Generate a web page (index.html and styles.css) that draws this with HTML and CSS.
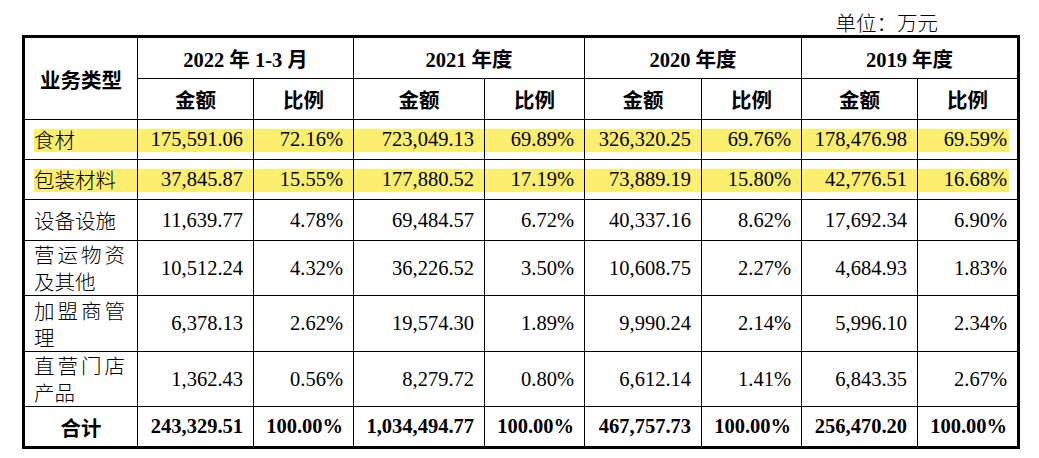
FILE: index.html
```html
<!DOCTYPE html>
<html lang="zh-CN">
<head>
<meta charset="utf-8">
<title>业务类型</title>
<link rel="stylesheet" href="styles.css">
</head>
<body>
<div class="wrap">
  <div class="unit">单位：万元</div>
  <table class="tbl">
    <colgroup>
      <col class="c1"><col class="c2"><col class="c3"><col class="c4"><col class="c5"><col class="c6"><col class="c7"><col class="c8"><col class="c9">
    </colgroup>
    <tr class="h1">
      <td rowspan="2" class="th">业务类型</td>
      <td colspan="2" class="th">2022 年 1-3 月</td>
      <td colspan="2" class="th">2021 年度</td>
      <td colspan="2" class="th">2020 年度</td>
      <td colspan="2" class="th last">2019 年度</td>
    </tr>
    <tr class="h2">
      <td class="th">金额</td><td class="th">比例</td>
      <td class="th">金额</td><td class="th">比例</td>
      <td class="th">金额</td><td class="th">比例</td>
      <td class="th">金额</td><td class="th last">比例</td>
    </tr>
    <tr class="r40 hl">
      <td class="cn">食材</td>
      <td class="num">175,591.06</td><td class="num">72.16%</td>
      <td class="num">723,049.13</td><td class="num">69.89%</td>
      <td class="num">326,320.25</td><td class="num">69.76%</td>
      <td class="num">178,476.98</td><td class="num last">69.59%</td>
    </tr>
    <tr class="r40 hl">
      <td class="cn">包装材料</td>
      <td class="num">37,845.87</td><td class="num">15.55%</td>
      <td class="num">177,880.52</td><td class="num">17.19%</td>
      <td class="num">73,889.19</td><td class="num">15.80%</td>
      <td class="num">42,776.51</td><td class="num last">16.68%</td>
    </tr>
    <tr class="r41">
      <td class="cn">设备设施</td>
      <td class="num">11,639.77</td><td class="num">4.78%</td>
      <td class="num">69,484.57</td><td class="num">6.72%</td>
      <td class="num">40,337.16</td><td class="num">8.62%</td>
      <td class="num">17,692.34</td><td class="num last">6.90%</td>
    </tr>
    <tr class="r55">
      <td class="cn">营运物资及其他</td>
      <td class="num">10,512.24</td><td class="num">4.32%</td>
      <td class="num">36,226.52</td><td class="num">3.50%</td>
      <td class="num">10,608.75</td><td class="num">2.27%</td>
      <td class="num">4,684.93</td><td class="num last">1.83%</td>
    </tr>
    <tr class="r56">
      <td class="cn">加盟商管理</td>
      <td class="num">6,378.13</td><td class="num">2.62%</td>
      <td class="num">19,574.30</td><td class="num">1.89%</td>
      <td class="num">9,990.24</td><td class="num">2.14%</td>
      <td class="num">5,996.10</td><td class="num last">2.34%</td>
    </tr>
    <tr class="r55">
      <td class="cn">直营门店产品</td>
      <td class="num">1,362.43</td><td class="num">0.56%</td>
      <td class="num">8,279.72</td><td class="num">0.80%</td>
      <td class="num">6,612.14</td><td class="num">1.41%</td>
      <td class="num">6,843.35</td><td class="num last">2.67%</td>
    </tr>
    <tr class="r39 total">
      <td class="th">合计</td>
      <td class="num">243,329.51</td><td class="num">100.00%</td>
      <td class="num">1,034,494.77</td><td class="num">100.00%</td>
      <td class="num">467,757.73</td><td class="num">100.00%</td>
      <td class="num">256,470.20</td><td class="num last">100.00%</td>
    </tr>
  </table>
</div>
</body>
</html>
```
FILE: styles.css
```css
html, body {
  margin: 0;
  padding: 0;
  background: #fff;
}
body {
  font-family: "Liberation Serif", "Noto Sans CJK SC", serif;
  font-size: 20.5px;
  color: #000;
}
.wrap {
  width: 998px;
  margin-left: 22px;
}
.unit {
  box-sizing: border-box;
  height: 35px;
  padding-top: 10px;
  line-height: 25px;
  padding-right: 82px;
  text-align: right;
  font-family: "Noto Sans CJK SC", sans-serif;
  font-weight: 300;
}
.tbl {
  box-sizing: border-box;
  width: 998px;
  table-layout: fixed;
  border-collapse: separate;
  border-spacing: 0;
  border: 3px solid #000;
}
.c1 { width: 113px; }
.c2 { width: 116px; }
.c3 { width: 100px; }
.c4 { width: 131px; }
.c5 { width: 100px; }
.c6 { width: 117px; }
.c7 { width: 100px; }
.c8 { width: 116px; }
.c9 { width: 99px; }
.tbl td {
  box-sizing: border-box;
  border-right: 1px solid #000;
  border-bottom: 1px solid #000;
  padding: 0;
  vertical-align: middle;
  white-space: nowrap;
}
.tbl td.last { border-right: 0; }
.tbl tr.total td { border-bottom: 0; }
.h1, .h2 { height: 41px; }
.r40 { height: 40px; }
.r41 { height: 41px; }
.r55 { height: 55px; }
.r56 { height: 56px; }
.r39 { height: 39px; }
.th {
  text-align: center;
  font-weight: bold;
}
.cn {
  font-family: "Noto Sans CJK SC", sans-serif;
  font-weight: 300;
  padding: 0 12px 0 9px !important;
  text-align: justify;
  line-height: 27px;
  white-space: normal !important;
}
.num {
  text-align: right;
  padding-right: 10px !important;
}
.total .num { font-weight: bold; }
.hl td {
  background-image: linear-gradient(#fcee6e, #fcee6e);
  background-repeat: no-repeat;
  background-size: 100% 23px;
  background-position: 0 9px;
}
.hl td:first-child {
  background-size: calc(100% - 9px) 23px;
  background-position: 9px 9px;
}
.hl td.last {
  background-size: calc(100% - 8px) 23px;
}
```
